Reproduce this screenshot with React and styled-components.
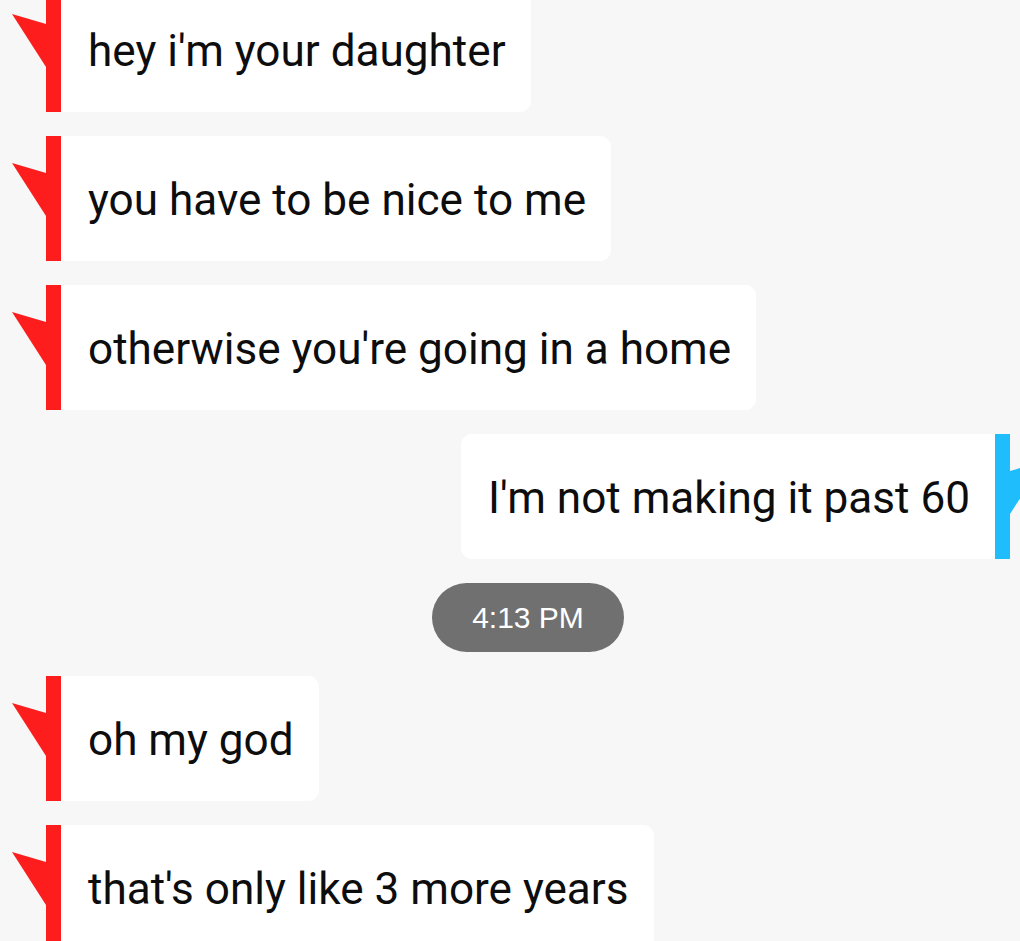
import React from "react";
import styled, { createGlobalStyle } from "styled-components";

const Global = createGlobalStyle`
  html, body {
    margin: 0;
    padding: 0;
    background: #f7f7f7;
    overflow: hidden;
  }
`;

const Thread = styled.div`
  width: 1056px;
  margin-top: -13px;
  display: flex;
  flex-direction: column;
  gap: 24px;
`;

const Row = styled.div`
  display: flex;
  align-items: stretch;
  justify-content: ${(p) => (p.$out ? "flex-end" : "flex-start")};
`;

const Tail = styled.svg`
  width: 46px;
  height: 125px;
  flex: none;
  display: block;
`;

const Bar = styled.div`
  width: 15px;
  flex: none;
  background: ${(p) => p.$color};
`;

const Bubble = styled.div`
  height: 125px;
  box-sizing: border-box;
  display: flex;
  align-items: center;
  background: #ffffff;
  padding: 2px 25px 0 27px;
  border-radius: ${(p) => (p.$out ? "11px 0 0 11px" : "0 11px 11px 0")};
  font-family: Roboto, "Noto Sans", sans-serif;
  font-size: 44.1px;
  color: #0d0d0d;
  white-space: nowrap;
`;

const Stamp = styled.div`
  align-self: center;
  width: 192px;
  height: 69px;
  border-radius: 35px;
  background: #707070;
  color: #ffffff;
  display: flex;
  align-items: center;
  justify-content: center;
  font-family: "Liberation Sans", Arial, sans-serif;
  font-size: 30px;
`;

const RED = "#fd1d1d";
const BLUE = "#1fbdfb";

function Incoming({ children }) {
  return (
    <Row>
      <Tail viewBox="0 0 46 125">
        <path d="M12 27 L46 37 L46 80 Z" fill={RED} />
      </Tail>
      <Bar $color={RED} />
      <Bubble>{children}</Bubble>
    </Row>
  );
}

function Outgoing({ children }) {
  return (
    <Row $out>
      <Bubble $out>{children}</Bubble>
      <Bar $color={BLUE} />
      <Tail viewBox="0 0 46 125">
        <path d="M34 27 L0 37 L0 80 Z" fill={BLUE} />
      </Tail>
    </Row>
  );
}

export default function App() {
  return (
    <>
      <Global />
      <Thread>
        <Incoming>hey i'm your daughter</Incoming>
        <Incoming>you have to be nice to me</Incoming>
        <Incoming>otherwise you're going in a home</Incoming>
        <Outgoing>I'm not making it past 60</Outgoing>
        <Stamp>4:13 PM</Stamp>
        <Incoming>oh my god</Incoming>
        <Incoming>that's only like 3 more years</Incoming>
      </Thread>
    </>
  );
}
